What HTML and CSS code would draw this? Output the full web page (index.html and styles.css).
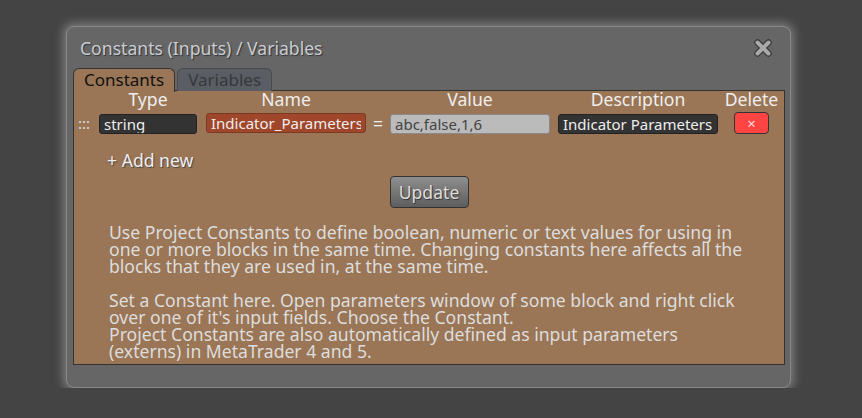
FILE: index.html
```html
<!doctype html>
<html lang="en">
<head>
  <meta charset="UTF-8">
  <title>Constants (Inputs) / Variables</title>
  <link rel="stylesheet" href="styles.css">
</head>
<body>

<div id="constants" class="dialog">
  <div class="titlebar">
    <span class="title">Constants (Inputs) / Variables</span>
    <a class="close" title="Close">
      <svg width="20" height="20" viewBox="0 0 20 20">
        <path d="M4.5 4.5 L15.5 15.5 M15.5 4.5 L4.5 15.5" stroke="#3a3a3a" stroke-width="6.5" stroke-linecap="round"/>
        <path d="M4.5 4.5 L15.5 15.5 M15.5 4.5 L4.5 15.5" stroke="#a9a9a9" stroke-width="4" stroke-linecap="round"/>
      </svg>
    </a>
  </div>

  <div class="tabs">
    <a class="tab active">Constants</a>
    <a class="tab">Variables</a>
  </div>

  <div class="panel">
    <div class="grid">
      <span></span>
      <span class="head w-type">Type</span>
      <span class="head w-wide">Name</span>
      <span class="head w-wide">Value</span>
      <span class="head w-wide">Description</span>
      <span class="head w-del">Delete</span>

      <span class="handle">:::</span>
      <span><input class="fld type w-type" value="string"></span>
      <span class="eq"><input class="fld name w-wide" value="Indicator_Parameters"> =</span>
      <span><input class="fld val w-wide" value="abc,false,1,6"></span>
      <span><input class="fld desc w-wide" value="Indicator Parameters"></span>
      <span><button class="del w-del">&times;</button></span>
    </div>

    <a class="addnew">+ Add new</a>

    <div class="actions">
      <button class="update">Update</button>
    </div>

    <p class="help">Use Project Constants to define boolean, numeric or text values for using in one or more blocks in the same time. Changing constants here affects all the blocks that they are used in, at the same time.</p>
    <p class="help">Set a Constant here. Open parameters window of some block and right click over one of it's input fields. Choose the Constant.<br>Project Constants are also automatically defined as input parameters (externs) in MetaTrader 4 and 5.</p>
  </div>
</div>

</body>
</html>
```

FILE: styles.css
```css
body {
  margin: 0;
  padding-top: 26px;
  background: #444;
  font-family: 'Noto Sans', 'Open Sans', sans-serif;
  font-size: 17.6px;
}

.dialog {
  box-sizing: border-box;
  width: 725px;
  height: 362px;
  margin-left: 66px;
  padding: 0 5px 0 6px;
  background: #666;
  border: 1px solid #888;
  border-radius: 8px;
  box-shadow: 0 0 10px 3px rgba(255,255,255,0.3);
}

.titlebar {
  display: flex;
  align-items: center;
  justify-content: space-between;
  height: 41px;
  padding: 0 12px 0 7px;
}

.title {
  color: #c9ccd3;
  text-shadow: 1px 1px 1px #333;
}

.close {
  display: block;
  width: 20px;
  height: 20px;
  cursor: pointer;
}

.tabs {
  display: flex;
  gap: 2px;
  height: 23px;
  position: relative;
  z-index: 1;
}

.tab {
  box-sizing: border-box;
  height: 23px;
  padding: 0 10px;
  font-size: 17px;
  line-height: 22px;
  background: #5a5d63;
  color: #37383b;
  border: 1px solid #4a4a4a;
  border-bottom: none;
  border-radius: 6px 6px 0 0;
  cursor: pointer;
}

.tab.active {
  height: 24px;
  background: #9a7656;
  color: #111;
  border-color: #333;
}

.panel {
  box-sizing: border-box;
  height: 275px;
  margin-top: -1px;
  padding: 0 3px;
  background: #9a7656;
  border: 1px solid #333;
}

.grid {
  display: grid;
  grid-template-columns: 22px 107px 184px 168px 176px 35px;
  row-gap: 4px;
  align-items: center;
  line-height: 20px;
}

.w-type { width: 98px; }
.w-wide { width: 160px; }
.w-del  { width: 35px; }

.head {
  display: block;
  color: #eee;
  text-align: center;
  line-height: 17px;
  white-space: nowrap;
}

.head.w-del {
  margin-left: -10px;
  width: 55px;
}

.handle {
  color: #ddd;
  font-size: 15px;
  padding-left: 1px;
}

.eq {
  display: flex;
  align-items: center;
  gap: 7px;
  color: #eee;
}

.fld {
  box-sizing: border-box;
  height: 20px;
  padding: 0 4px;
  font-family: inherit;
  font-size: 15px;
  border-radius: 3px;
  outline: none;
}

.fld.type,
.fld.desc {
  background: #333;
  color: #eee;
  border: 1px solid #222;
}

.fld.name {
  background: #a0462a;
  color: #eee;
  border: 1px solid #7a3a24;
}

.fld.val {
  background: #bbb;
  color: #444;
  border: 1px solid #8a8a8a;
}

.del {
  display: block;
  height: 22px;
  padding: 0;
  background: #f44;
  color: #fdd;
  border: 1px solid #333;
  border-radius: 4px;
  font-size: 15px;
  line-height: 18px;
  font-family: inherit;
}

.addnew {
  display: block;
  width: max-content;
  margin: 14px 0 0 30px;
  color: #eee;
  text-shadow: 1px 1px 1px #444;
  cursor: pointer;
}

.actions {
  display: flex;
  justify-content: center;
  margin-top: 4px;
}

.update {
  width: 79px;
  height: 32px;
  padding: 0;
  font-family: inherit;
  font-size: 17.6px;
  color: #ddd;
  text-shadow: 1px 1px 1px #333;
  background: linear-gradient(#8e8e8e, #5e5e5e);
  border: 1px solid #333;
  border-radius: 4px;
}

.help {
  width: 638px;
  margin: 16px 0 17px 32px;
  color: #ddd;
  line-height: 17px;
}

.help + .help {
  margin-top: 0;
}
```
